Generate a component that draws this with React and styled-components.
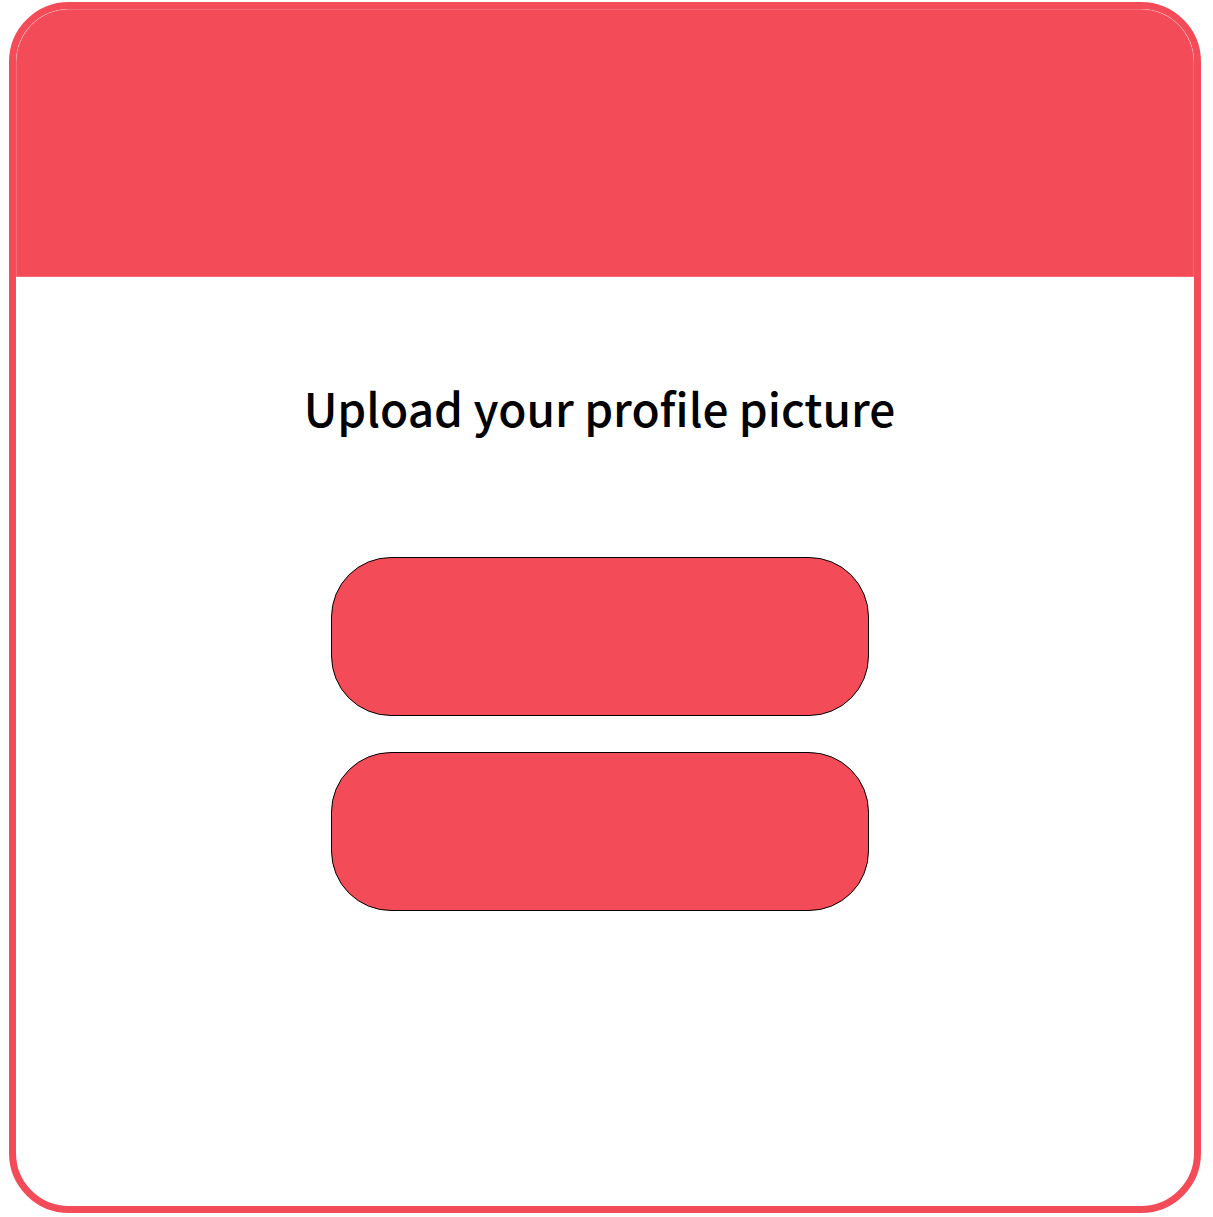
import React from "react";
import styled, { createGlobalStyle } from "styled-components";

const Global = createGlobalStyle`
  body {
    margin: 0;
    background: #fff;
    font-family: "Noto Sans CJK JP", "Noto Sans", sans-serif;
  }
`;

const red = "#f34c58";

const Frame = styled.div`
  box-sizing: border-box;
  width: 1192px;
  height: 1211px;
  margin: 2px 0 0 9px;
  border: 7px solid ${red};
  border-radius: 60px;
  background: #fff;
  overflow: hidden;
  display: flex;
  flex-direction: column;
`;

const Header = styled.div`
  height: 268px;
  background: ${red};
  border-radius: 53px 53px 0 0;
  box-shadow: inset 0 0 0 0.5px rgba(255, 255, 255, 0.35);
`;

const Content = styled.div`
  display: flex;
  flex-direction: column;
  align-items: center;
  padding-right: 11px;
`;

const Title = styled.h1`
  margin: 100px 0 0;
  font-size: 46px;
  line-height: 60px;
  font-weight: 500;
  color: #000;
`;

const Actions = styled.div`
  display: flex;
  flex-direction: column;
  gap: 36px;
  margin-top: 120px;
`;

const Button = styled.button`
  box-sizing: border-box;
  width: 538px;
  height: 159px;
  background: ${red};
  border: 1px solid #000;
  border-radius: 60px;
  cursor: pointer;
`;

export default function App() {
  return (
    <>
      <Global />
      <Frame>
        <Header />
        <Content>
          <Title>Upload your profile picture</Title>
          <Actions>
            <Button aria-label="Take a photo" />
            <Button aria-label="Choose from gallery" />
          </Actions>
        </Content>
      </Frame>
    </>
  );
}
